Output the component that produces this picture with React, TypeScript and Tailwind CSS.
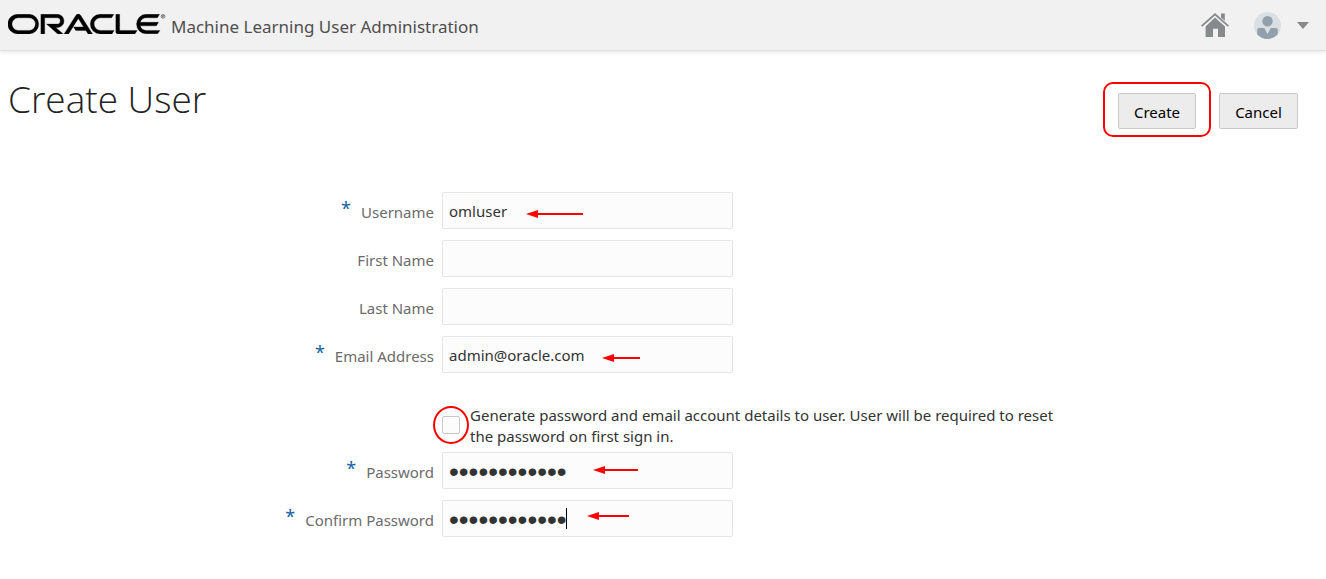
import { useState } from "react";
import type { ReactNode } from "react";

function OracleLogo() {
  return (
    <svg viewBox="0 0 240 30" className="h-5 w-[158px] shrink-0" role="img" aria-label="Oracle">
      <path
        fill="#000"
        d="M99.61,19.52h15.24l-8.05-13L92,30H85.27l18-28.17a4.29,4.29,0,0,1,7-.05L128.32,30h-6.73l-3.17-5.25H103l-3.36-5.23m69.93,5.23V0.28h-5.72V27.16a2.76,2.76,0,0,0,.85,2,2.89,2.89,0,0,0,2.08.87h26l3.39-5.25H169.54M75,20.38A10,10,0,0,0,75,.28H50V30h5.71V5.54H74.65a4.81,4.81,0,0,1,0,9.62H58.54L75.6,30h8.29L72.43,20.38H75M14.88,30H32.15a14.86,14.86,0,0,0,0-29.71H14.88a14.86,14.86,0,1,0,0,29.71m16.88-5.23H15.26a9.62,9.62,0,0,1,0-19.23h16.5a9.62,9.62,0,1,1,0,19.23M140.25,30h17.63l3.34-5.23H140.64a9.62,9.62,0,1,1,0-19.23h16.75l3.38-5.25H140.25a14.86,14.86,0,1,0,0,29.71m69.87-5.23a9.62,9.62,0,0,1-9.26-7h24.42l3.36-5.24H200.86a9.61,9.61,0,0,1,9.26-7h16.76l3.35-5.25h-20.5a14.86,14.86,0,0,0,0,29.71h17.63l3.35-5.23h-20"
        stroke="#000"
        strokeWidth="0.5"
      />
      <circle cx="235.5" cy="3.4" r="2.8" fill="none" stroke="#333" strokeWidth="0.9" />
      <path d="M234.5 5V1.9h1.3a.8.8 0 0 1 0 1.6h-1.3M235.8 3.5l.9 1.5" fill="none" stroke="#333" strokeWidth="0.7" />
    </svg>
  );
}

function HomeIcon() {
  return (
    <svg viewBox="0 0 28 24" className="h-6 w-7" aria-hidden="true">
      <path fill="#878a8c" d="M14 0 28 12.6 26.8 13.8 14 2.4 1.2 13.8 0 12.6z" />
      <path fill="#878a8c" d="M20 .6h3.8v7.2L20 4.4z" />
      <path fill="#878a8c" d="M14 4.4 24 13.4V24h-7v-8.2h-5V24H4.6V13.4z" />
    </svg>
  );
}

function UserIcon() {
  return (
    <svg viewBox="0 0 27 27" className="size-[27px]" aria-hidden="true">
      <circle cx="13.5" cy="13.5" r="13.5" fill="#d9dfe3" />
      <circle cx="13.5" cy="9.2" r="5.2" fill="#91a0ab" />
      <path
        fill="#91a0ab"
        d="M5.2 16h5.1l3.2 6 3.2-6h5.1a2 2 0 0 1 2 2v4.2A13.5 13.5 0 0 1 13.5 27 13.5 13.5 0 0 1 3.2 22.2V18a2 2 0 0 1 2-2z"
      />
    </svg>
  );
}

function Arrow({ length, className }: { length: number; className: string }) {
  return (
    <svg width={length} height="8" viewBox={`0 0 ${length} 8`} className={`pointer-events-none absolute ${className}`} aria-hidden="true">
      <path d={`M9 4H${length}`} stroke="#f00" strokeWidth="2" />
      <path d="M0 4 12 0V8z" fill="#f00" />
    </svg>
  );
}

type FieldProps = {
  id: string;
  label: string;
  required?: boolean;
  type?: string;
  initial?: string;
  children?: ReactNode;
};

function Field({ id, label, required, type = "text", initial = "", children }: FieldProps) {
  const [value, setValue] = useState(initial);
  const face =
    type === "password"
      ? "pt-0.5 font-['Liberation_Sans',sans-serif] text-[28px]"
      : "text-[15px]";
  return (
    <div className="grid grid-cols-[minmax(0,434px)_minmax(0,1fr)] gap-2">
      <label htmlFor={id} className="flex items-center justify-end gap-2.5 pt-1 text-[15px] text-[#6b6b6b]">
        {required && <span className="pb-2.5 text-lg leading-4 text-[#1464a5]">*</span>}
        {label}
      </label>
      <div className="relative max-w-[291px]">
        <input
          id={id}
          type={type}
          value={value}
          required={required}
          onChange={(e) => setValue(e.target.value)}
          className={`block h-[37px] w-full rounded-xs border border-[#e3e5e7] bg-[#fcfcfc] px-1.5 text-[#333] outline-none ${face}`}
        />
        {children}
      </div>
    </div>
  );
}

export default function App() {
  const [generate, setGenerate] = useState(false);
  return (
    <div className="min-h-screen bg-white font-['Noto_Sans','Open_Sans',sans-serif] text-[#333]">
      <header className="flex h-[51px] items-center justify-between border-b border-[#e2e2e2] bg-[#f1f1f1] pr-[17px] pl-2 shadow-[0_1px_4px_rgba(0,0,0,0.12)]">
        <div className="flex items-center gap-[5px]">
          <div className="pb-0.5">
            <OracleLogo />
          </div>
          <span className="pt-1 text-[17px] leading-6 text-[#4f4f4f]">Machine Learning User Administration</span>
        </div>
        <div className="flex items-center">
          <a href="#home" aria-label="Home" className="mr-[25px]">
            <HomeIcon />
          </a>
          <button type="button" aria-label="User menu" className="flex items-center gap-4">
            <UserIcon />
            <svg viewBox="0 0 12 7" className="h-[7px] w-3" aria-hidden="true">
              <path d="M0 0h12L6 7z" fill="#87898b" />
            </svg>
          </button>
        </div>
      </header>

      <form onSubmit={(e) => e.preventDefault()}>
        <div className="flex items-start justify-between pt-6 pr-7 pl-2">
          <h1 className="font-['Open_Sans',sans-serif] text-[37px] leading-12 font-light text-[#222]">Create User</h1>
          <div className="flex gap-[23px] pt-[18px]">
            <div className="relative">
              <button type="submit" className="h-9 w-[78px] rounded-xs border border-[#c9c9c9] bg-[#ececec] pt-0.5 text-[15px] text-black">
                Create
              </button>
              <span className="pointer-events-none absolute -inset-x-[15px] -top-[11px] -bottom-2 rounded-[10px] border-2 border-[#f00]" />
            </div>
            <button type="button" className="h-9 w-[79px] rounded-xs border border-[#c9c9c9] bg-[#ececec] pt-0.5 text-[15px] text-black">
              Cancel
            </button>
          </div>
        </div>

        <div className="flex flex-col gap-[11px] pt-[63px]">
          <Field id="username" label="Username" required initial="omluser">
            <Arrow length={57} className="top-[18px] left-[84px]" />
          </Field>
          <Field id="first-name" label="First Name" />
          <Field id="last-name" label="Last Name" />
          <Field id="email" label="Email Address" required initial="admin@oracle.com">
            <Arrow length={38} className="top-[18px] left-[160px]" />
          </Field>
        </div>

        <div className="flex items-start pt-8 pr-4 pb-[5px] pl-[442px]">
          <div className="relative mt-[11px] mr-[10px] size-[18px] shrink-0">
            <input
              id="generate"
              type="checkbox"
              checked={generate}
              onChange={(e) => setGenerate(e.target.checked)}
              className="block size-[18px] appearance-none rounded-xs border border-[#c8c8c8] bg-[#fcfcfc] checked:bg-[#1464a5]"
            />
            <span className="pointer-events-none absolute -inset-x-[9px] -inset-y-[10px] rounded-[50%] border-2 border-[#f00]" />
          </div>
          <label htmlFor="generate" className="max-w-[600px] text-[15px] leading-[21px] text-[#333]">
            Generate password and email account details to user. User will be required to reset the password on first sign in.
          </label>
        </div>

        <div className="flex flex-col gap-[11px]">
          <Field id="password" label="Password" required type="password" initial="Password1234">
            <Arrow length={45} className="top-[14px] left-[151px]" />
          </Field>
          <Field id="confirm-password" label="Confirm Password" required type="password" initial="Password1234">
            <span className="pointer-events-none absolute top-2 left-[124px] h-[21px] w-px bg-black" />
            <Arrow length={42} className="top-3 left-[145px]" />
          </Field>
        </div>
      </form>
    </div>
  );
}
